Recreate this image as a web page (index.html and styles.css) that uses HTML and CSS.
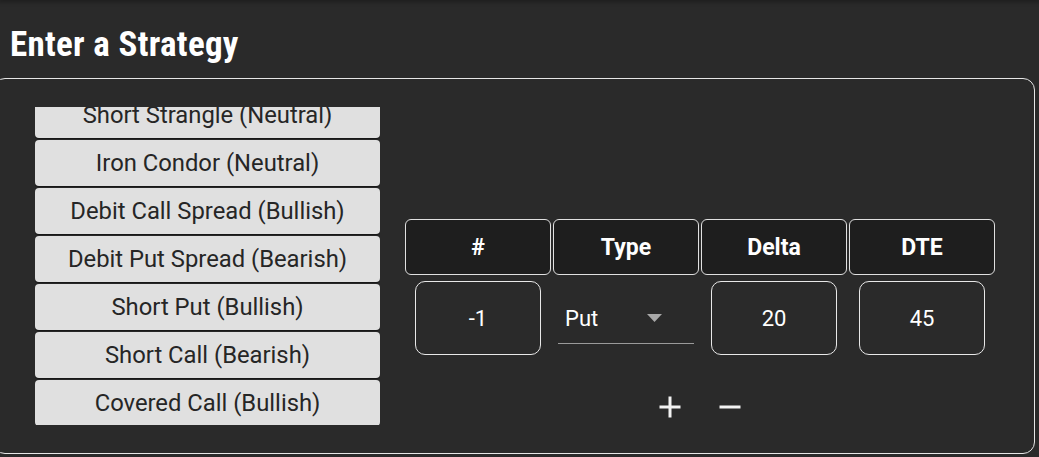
FILE: index.html
```html
<!DOCTYPE html>
<html>
<head>
<meta charset="utf-8">
<link rel="stylesheet" href="styles.css">
</head>
<body>
<div class="topshade"></div>
<h1 class="title">Enter a Strategy</h1>
<div class="panel">
  <div class="list">
    <div class="list-inner">
      <button class="strat">Short Strangle (Neutral)</button>
      <button class="strat">Iron Condor (Neutral)</button>
      <button class="strat">Debit Call Spread (Bullish)</button>
      <button class="strat">Debit Put Spread (Bearish)</button>
      <button class="strat">Short Put (Bullish)</button>
      <button class="strat">Short Call (Bearish)</button>
      <button class="strat">Covered Call (Bullish)</button>
    </div>
  </div>
  <div class="legs">
    <div class="grid head">
      <div class="hcell">#</div>
      <div class="hcell">Type</div>
      <div class="hcell">Delta</div>
      <div class="hcell">DTE</div>
    </div>
    <div class="grid row">
      <div class="cell"><div class="field">-1</div></div>
      <div class="cell">
        <div class="select"><span>Put</span><svg class="caret" width="15" height="8" viewBox="0 0 15 8"><path d="M0 0h15L7.5 8z" fill="#a8a8a8"/></svg></div>
      </div>
      <div class="cell"><div class="field">20</div></div>
      <div class="cell"><div class="field">45</div></div>
    </div>
    <div class="actions">
      <button class="icon-btn" aria-label="add"><svg width="36" height="36" viewBox="0 0 24 24"><path d="M19 13h-6v6h-2v-6H5v-2h6V5h2v6h6v2z" fill="#f2f2f2"/></svg></button>
      <button class="icon-btn" aria-label="remove"><svg width="36" height="36" viewBox="0 0 24 24"><path d="M19 13H5v-2h14v2z" fill="#f2f2f2"/></svg></button>
    </div>
  </div>
</div>
</body>
</html>
```
FILE: styles.css
```css
html, body {
  margin: 0;
  padding: 0;
  background: #2a2a2a;
  font-family: Roboto, "Liberation Sans", sans-serif;
  overflow: hidden;
  width: 1039px;
  height: 457px;
}
.topshade {
  height: 0;
  box-shadow: 0 0 4px 2px rgba(0,0,0,0.35);
}
.title {
  margin: 0 0 13px 0;
  padding: 25px 0 0 10px;
  font-size: 35px;
  line-height: 40px;
  font-weight: 700;
  font-stretch: 86%;
  letter-spacing: 0.3px;
  color: #ffffff;
}
.panel {
  display: flex;
  align-items: flex-start;
  gap: 25px;
  margin: 0 4px 0 -7px;
  padding: 28px 39px 28px 41px;
  border: 1px solid #e6e6e6;
  border-radius: 12px;
}
.list {
  width: 345px;
  height: 318px;
  overflow: hidden;
  flex: none;
}
.list-inner {
  margin-top: -15px;
  display: flex;
  flex-direction: column;
  gap: 2px;
}
.strat {
  height: 46px;
  width: 345px;
  border: none;
  border-radius: 4px;
  background: #e0e0e0;
  box-shadow: 0 1px 1px rgba(0,0,0,0.45), -1px 0 1px rgba(0,0,0,0.25);
  color: #262626;
  font-family: Roboto, "Liberation Sans", sans-serif;
  font-size: 23.8px;
  padding: 0;
}
.legs {
  width: 590px;
  padding-top: 112px;
  display: flex;
  flex-direction: column;
}
.grid {
  display: grid;
  grid-template-columns: repeat(4, 146px);
  gap: 2px;
}
.hcell {
  height: 56px;
  box-sizing: border-box;
  border: 1px solid #e0e0e0;
  border-radius: 6px;
  background: #1e1e1e;
  color: #ffffff;
  font-weight: 700;
  font-size: 23px;
  display: flex;
  align-items: center;
  justify-content: center;
}
.row {
  margin-top: 6px;
}
.cell {
  display: flex;
  align-items: center;
  justify-content: center;
  height: 74px;
}
.field {
  width: 126px;
  height: 74px;
  box-sizing: border-box;
  border: 1.5px solid #e8e8e8;
  border-radius: 10px;
  display: flex;
  align-items: center;
  justify-content: center;
  color: #ffffff;
  font-size: 22px;
}
.select {
  width: 136px;
  height: 50px;
  box-sizing: border-box;
  border-bottom: 1.5px solid #9a9a9a;
  display: flex;
  align-items: center;
  justify-content: space-between;
  padding: 0 32px 0 7px;
  color: #ffffff;
  font-size: 22px;
  margin-top: 1px;
}
.actions {
  display: flex;
  justify-content: center;
  gap: 24px;
  margin-top: 34px;
}
.icon-btn {
  width: 36px;
  height: 36px;
  padding: 0;
  border: none;
  background: transparent;
  display: flex;
  align-items: center;
  justify-content: center;
}
```
